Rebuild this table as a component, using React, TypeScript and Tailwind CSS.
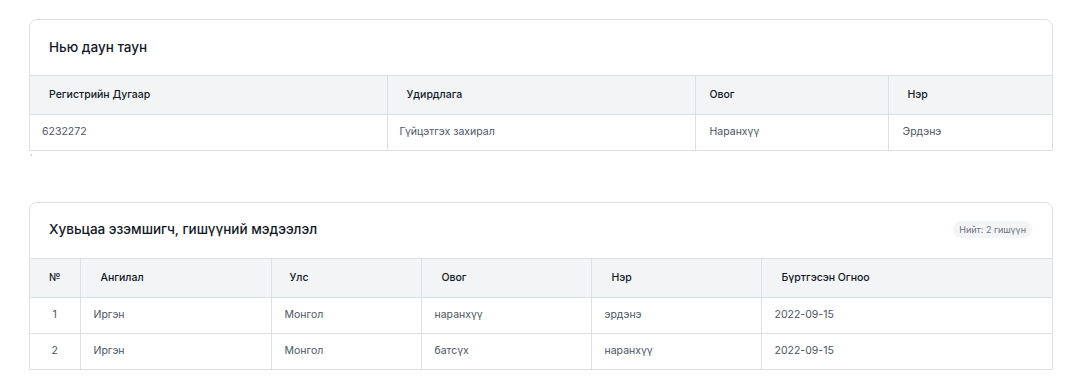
const font = { fontFamily: "Inter, 'Noto Sans', sans-serif" };

export default function App() {
  const owners = [
    { no: 1, type: "Иргэн", country: "Монгол", last: "наранхүү", first: "эрдэнэ", date: "2022-09-15" },
    { no: 2, type: "Иргэн", country: "Монгол", last: "батсүх", first: "наранхүү", date: "2022-09-15" },
  ];

  return (
    <div className="min-h-screen bg-white px-[29px] pt-[19px] text-[#111827]" style={font}>
      {/* Company */}
      <section className="w-[1024px] border border-[#dcdfe4] rounded-t-lg">
        <div className="h-[55px] flex items-center px-[19px]">
          <h2 className="text-[13.5px] font-medium text-[#111827] mt-[-1px]">Нью даун таун</h2>
        </div>
        <table className="w-full border-collapse text-[10.5px]">
          <thead>
            <tr className="bg-[#f3f4f6] h-[39px] border-t border-[#dcdfe4]">
              <th className="w-[357px] text-left font-medium pl-[19px] border-r border-[#dcdfe4]">Регистрийн Дугаар</th>
              <th className="w-[308px] text-left font-medium pl-[19px] border-r border-[#dcdfe4]">Удирдлага</th>
              <th className="w-[193px] text-left font-medium pl-[14px] border-r border-[#dcdfe4]">Овог</th>
              <th className="text-left font-medium pl-[19px]">Нэр</th>
            </tr>
          </thead>
          <tbody className="text-[#4b5563]">
            <tr className="h-[35px] border-t border-[#dcdfe4]">
              <td className="pl-[12px] border-r border-[#dcdfe4]">6232272</td>
              <td className="pl-[12px] border-r border-[#dcdfe4]">Гүйцэтгэх захирал</td>
              <td className="pl-[14px] border-r border-[#dcdfe4]">Наранхүү</td>
              <td className="pl-[14px]">Эрдэнэ</td>
            </tr>
          </tbody>
        </table>
      </section>
      <div className="h-[51px] text-[8px] leading-[14px] text-[#6b7280] pl-[1px]">`</div>

      {/* Shareholders */}
      <section className="w-[1024px] border border-[#dcdfe4] rounded-t-lg">
        <div className="h-[55px] flex items-center justify-between pl-[19px] pr-5">
          <h2 className="text-[13.5px] font-medium text-[#111827] mt-[-1px]">Хувьцаа эзэмшигч, гишүүний мэдээлэл</h2>
          <span className="rounded-full bg-[#f3f4f6] px-[6px] py-[3px] text-[9px] leading-[11px] text-[#6b7280] mt-[-2px]">Нийт: 2 гишүүн</span>
        </div>
        <table className="w-full border-collapse text-[10.5px]">
          <thead>
            <tr className="bg-[#f3f4f6] h-[39px] border-t border-[#dcdfe4]">
              <th className="w-[50px] text-center font-medium border-r border-[#dcdfe4]">№</th>
              <th className="w-[191px] text-left font-medium pl-5 border-r border-[#dcdfe4]">Ангилал</th>
              <th className="w-[150px] text-left font-medium pl-[18px] border-r border-[#dcdfe4]">Улс</th>
              <th className="w-[170px] text-left font-medium pl-5 border-r border-[#dcdfe4]">Овог</th>
              <th className="w-[170px] text-left font-medium pl-5 border-r border-[#dcdfe4]">Нэр</th>
              <th className="text-left font-medium pl-5">Бүртгэсэн Огноо</th>
            </tr>
          </thead>
          <tbody className="text-[#4b5563]">
            {owners.map((o) => (
              <tr key={o.no} className="h-[36px] border-t border-[#dcdfe4]">
                <td className="text-center border-r border-[#dcdfe4]">{o.no}</td>
                <td className="pl-[13px] border-r border-[#dcdfe4]">{o.type}</td>
                <td className="pl-[13px] border-r border-[#dcdfe4]">{o.country}</td>
                <td className="pl-[13px] border-r border-[#dcdfe4]">{o.last}</td>
                <td className="pl-[13px] border-r border-[#dcdfe4]">{o.first}</td>
                <td className="pl-[13px]">{o.date}</td>
              </tr>
            ))}
          </tbody>
        </table>
      </section>
    </div>
  );
}
